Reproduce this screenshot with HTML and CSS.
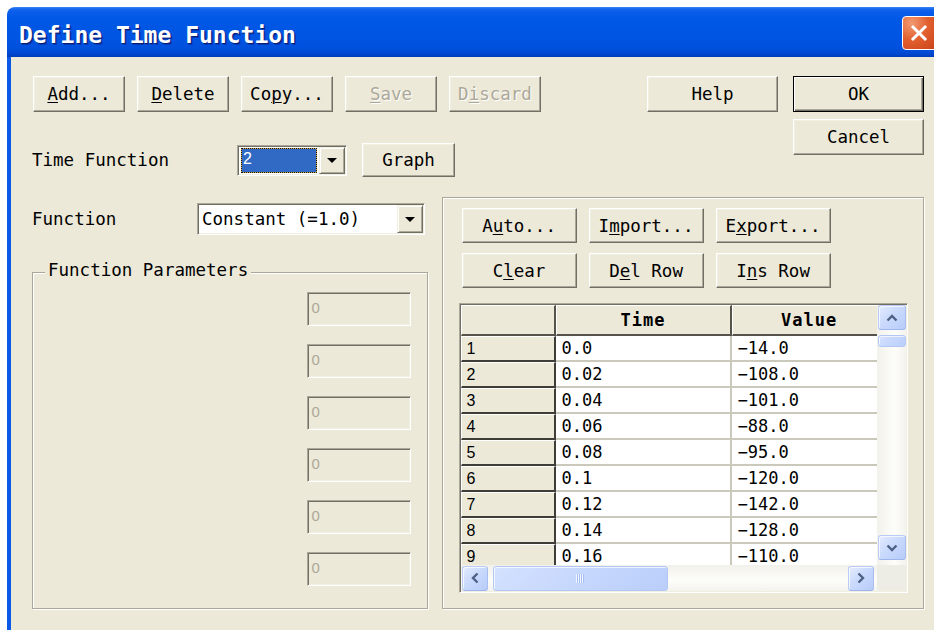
FILE: index.html
```html
<!DOCTYPE html>
<html lang="en">
<head>
<meta charset="utf-8">
<title>Define Time Function</title>
<link rel="stylesheet" href="styles.css">
</head>
<body>
<div class="window">
  <header class="titlebar">
    <span class="title">Define Time Function</span>
    <span class="close" aria-label="Close">
      <svg width="20" height="20" viewBox="0 0 20 20"><path d="M4 4 L16 16 M16 4 L4 16" stroke="#fff" stroke-width="3" stroke-linecap="square" fill="none"/></svg>
    </span>
  </header>
  <div class="frame">
    <div class="content">
      <div class="top">
        <div class="top-left">
          <div class="btn-row">
            <button class="btn"><u>A</u>dd...</button>
            <button class="btn"><u>D</u>elete</button>
            <button class="btn">Co<u>p</u>y...</button>
            <button class="btn" disabled><u>S</u>ave</button>
            <button class="btn" disabled>D<u>i</u>scard</button>
          </div>
          <div class="tf-row">
            <span class="label label-tf">Time Function</span>
            <div class="combo combo-tf">
              <div class="combo-field"><span class="combo-sel">2</span></div>
              <span class="combo-drop"><i class="tri"></i></span>
            </div>
            <button class="btn btn-graph">Graph</button>
          </div>
        </div>
        <div class="top-right">
          <button class="btn btn-wide">Help</button>
          <div class="ok-col">
            <button class="btn btn-wide btn-default">OK</button>
            <button class="btn btn-wide">Cancel</button>
          </div>
        </div>
      </div>

      <div class="lower">
        <div class="left-col">
          <div class="fn-row">
            <span class="label label-fn">Function</span>
            <div class="combo combo-fn">
              <div class="combo-field"><span class="combo-text">Constant (=1.0)</span></div>
              <span class="combo-drop"><i class="tri"></i></span>
            </div>
          </div>
          <div class="group">
            <span class="group-title">Function Parameters</span>
            <div class="params">
              <div class="field">0</div>
              <div class="field">0</div>
              <div class="field">0</div>
              <div class="field">0</div>
              <div class="field">0</div>
              <div class="field">0</div>
            </div>
          </div>
        </div>

        <div class="panel">
          <div class="panel-btns">
            <button class="btn">A<u>u</u>to...</button>
            <button class="btn">I<u>m</u>port...</button>
            <button class="btn">E<u>x</u>port...</button>
            <button class="btn">C<u>l</u>ear</button>
            <button class="btn">D<u>e</u>l Row</button>
            <button class="btn">I<u>n</u>s Row</button>
          </div>
          <div class="grid-box">
            <div class="sheet">
              <div class="cells">
                <div class="hd"></div><div class="hd">Time</div><div class="hd">Value</div>
                <div class="rh">1</div><div class="dc">0.0</div><div class="dc">&minus;14.0</div>
                <div class="rh">2</div><div class="dc">0.02</div><div class="dc">&minus;108.0</div>
                <div class="rh">3</div><div class="dc">0.04</div><div class="dc">&minus;101.0</div>
                <div class="rh">4</div><div class="dc">0.06</div><div class="dc">&minus;88.0</div>
                <div class="rh">5</div><div class="dc">0.08</div><div class="dc">&minus;95.0</div>
                <div class="rh">6</div><div class="dc">0.1</div><div class="dc">&minus;120.0</div>
                <div class="rh">7</div><div class="dc">0.12</div><div class="dc">&minus;142.0</div>
                <div class="rh">8</div><div class="dc">0.14</div><div class="dc">&minus;128.0</div>
                <div class="rh">9</div><div class="dc">0.16</div><div class="dc">&minus;110.0</div>
              </div>
            </div>
            <div class="vscroll">
              <span class="sb-btn"><svg width="12" height="8" viewBox="0 0 12 8"><path d="M1.5 6.5 L6 2 L10.5 6.5" fill="none" stroke="#4D6185" stroke-width="2.4"/></svg></span>
              <span class="thumb thumb-v"></span>
              <span class="sb-space"></span>
              <span class="sb-btn sb-last"><svg width="12" height="8" viewBox="0 0 12 8"><path d="M1.5 1.5 L6 6 L10.5 1.5" fill="none" stroke="#4D6185" stroke-width="2.4"/></svg></span>
            </div>
            <div class="hscroll">
              <span class="sb-btn"><svg width="8" height="12" viewBox="0 0 8 12"><path d="M6.5 1.5 L2 6 L6.5 10.5" fill="none" stroke="#4D6185" stroke-width="2.4"/></svg></span>
              <span class="thumb thumb-h"><i class="grip"></i></span>
              <span class="sb-space"></span>
              <span class="sb-btn"><svg width="8" height="12" viewBox="0 0 8 12"><path d="M1.5 1.5 L6 6 L1.5 10.5" fill="none" stroke="#4D6185" stroke-width="2.4"/></svg></span>
            </div>
            <div class="corner"></div>
          </div>
        </div>
      </div>
    </div>
  </div>
</div>
</body>
</html>
```

FILE: styles.css
```css
* { box-sizing: border-box; }

html, body { margin: 0; padding: 0; }

body {
  width: 934px;
  height: 630px;
  overflow: hidden;
  background: #fff;
  font-family: "DejaVu Sans Mono", "Liberation Mono", monospace;
  font-size: 17.5px;
  color: #000;
}

/* ---------- window chrome ---------- */
.window {
  margin: 7px 0 0 7px;
  width: 927px;
  height: 623px;
  overflow: hidden;
  border-top-left-radius: 8px;
  background: #ECE9D8;
  display: flex;
  flex-direction: column;
}

.titlebar {
  flex: none;
  height: 50px;
  display: flex;
  align-items: flex-start;
  padding-left: 12px;
  background: linear-gradient(to bottom,
    #3B86F6 0px, #1566EE 2px, #0A5DEA 5px, #0058E6 12px,
    #0055E2 30px, #0050DC 42px, #0047D0 47px, #003CB8 50px);
}

.title {
  margin-top: 15px;
  line-height: 27px;
  font-size: 23px;
  font-weight: bold;
  color: #fff;
  text-shadow: 1px 1px 0 #0A1E78, 2px 2px 0 rgba(10, 30, 120, .45);
  white-space: nowrap;
}

.close {
  margin: 9px -4px 0 auto;
  width: 36px;
  height: 34px;
  border: 1px solid #fff;
  border-radius: 4px;
  background: radial-gradient(circle at 25% 20%, #F29A74 0%, #E2602F 45%, #C9401A 100%);
  display: flex;
  align-items: center;
  justify-content: center;
  padding-right: 3px;
}

.frame {
  flex: 1;
  border-left: 4px solid #0A58E6;
}

.content {
  padding: 19px 10px 0 21px;
}

/* ---------- controls ---------- */
.btn {
  appearance: none;
  margin: 0;
  padding: 0;
  font: inherit;
  color: #000;
  background: #ECE9D8;
  border: 1px solid;
  border-color: #fff #716F64 #716F64 #fff;
  box-shadow: inset -1px -1px 0 #ACA899, inset 1px 1px 0 #F1EFE2;
  white-space: nowrap;
  text-align: center;
}

.btn u { text-underline-offset: 2px; text-decoration-thickness: 1px; }

.btn:disabled {
  color: #ACA899;
  text-shadow: 1px 1px 0 #fff;
}

.btn-default {
  border-color: #000;
  box-shadow: inset 1px 1px 0 #fff, inset -1px -1px 0 #716F64, inset -2px -2px 0 #ACA899;
}

.label { white-space: nowrap; }

.sunken {
  border: 1px solid;
  border-color: #ACA899 #fff #fff #ACA899;
  box-shadow: inset 1px 1px 0 #716F64, inset -1px -1px 0 #F1EFE2;
}

.combo {
  display: flex;
  padding: 1px;
  border: 1px solid;
  border-color: #ACA899 #fff #fff #ACA899;
  box-shadow: inset 1px 1px 0 #716F64, inset -1px -1px 0 #F1EFE2;
  background: #fff;
}

.combo-field {
  flex: 1;
  display: flex;
  align-items: center;
  background: #fff;
  min-width: 0;
}

.combo-drop {
  flex: none;
  width: 26px;
  display: flex;
  align-items: center;
  justify-content: center;
  background: #ECE9D8;
  border: 1px solid;
  border-color: #F1EFE2 #716F64 #716F64 #F1EFE2;
  box-shadow: inset 1px 1px 0 #fff, inset -1px -1px 0 #ACA899;
}

.tri {
  width: 0;
  height: 0;
  border-left: 5px solid transparent;
  border-right: 5px solid transparent;
  border-top: 5px solid #000;
  margin-top: 1px;
}

/* ---------- top area ---------- */
.top {
  display: flex;
  justify-content: space-between;
  height: 101px;
}

.btn-row {
  display: flex;
  gap: 12px;
  margin-left: 1px;
}

.btn-row .btn { width: 92px; height: 36px; }

.tf-row {
  display: flex;
  align-items: center;
  margin-top: 31px;
  height: 34px;
}

.label-tf { width: 205px; }

.combo-tf { width: 110px; height: 31px; }

.combo-tf .combo-field { padding: 1px 2px 1px 2px; align-items: stretch; }

.combo-sel {
  flex: 1;
  background: #316AC5;
  color: #fff;
  font-family: "Liberation Sans", Arial, sans-serif;
  font-size: 16px;
  line-height: 20px;
  padding-left: 1px;
  border: 1px solid #D8A848;
  outline: 1px dotted #111;
  outline-offset: -1px;
}

.btn-graph { width: 93px; height: 34px; margin-left: 15px; }

.top-right {
  display: flex;
  gap: 15px;
  align-items: flex-start;
}

.btn-wide { width: 131px; height: 36px; }

.ok-col {
  display: flex;
  flex-direction: column;
  gap: 7px;
}

/* ---------- lower area ---------- */
.lower {
  display: flex;
  gap: 14px;
  margin-top: 20px;
}

.left-col {
  width: 396px;
  display: flex;
  flex-direction: column;
}

.fn-row {
  display: flex;
  align-items: center;
  margin-top: 6px;
  height: 32px;
}

.label-fn { width: 165px; }

.combo-fn { width: 228px; height: 32px; }

.combo-text { padding-left: 3px; white-space: pre; }

.group {
  margin-top: 37px;
  height: 337px;
  border: 1px solid #ACA899;
  box-shadow: inset 1px 1px 0 #fff, 1px 1px 0 #fff;
  padding: 0 16px 0 12px;
}

.group-title {
  display: table;
  margin-top: -13px;
  padding: 0 3px;
  line-height: 20px;
  background: #ECE9D8;
  white-space: nowrap;
}

.params {
  display: flex;
  flex-direction: column;
  align-items: flex-end;
  gap: 18px;
  margin-top: 12px;
}

.field {
  width: 104px;
  height: 34px;
  padding: 7px 0 0 4px;
  border: 1px solid;
  border-color: #ACA899 #fff #fff #ACA899;
  box-shadow: inset 1px 1px 0 #716F64, inset -1px -1px 0 #F1EFE2;
  background: #ECE9D8;
  color: #ACA899;
  font-family: "Liberation Sans", Arial, sans-serif;
  font-size: 15px;
  line-height: 16px;
}

.panel {
  width: 483px;
  height: 412px;
  border: 1px solid #ACA899;
  box-shadow: inset 1px 1px 0 #fff, 1px 1px 0 #fff;
  padding: 10px 0 0 19px;
}

.panel-btns {
  display: grid;
  grid-template-columns: repeat(3, 115px);
  column-gap: 12px;
  row-gap: 10px;
}

.panel-btns .btn { height: 35px; }

/* ---------- spreadsheet ---------- */
.grid-box {
  margin: 15px 0 0 -3px;
  width: 449px;
  height: 290px;
  padding: 1px;
  border: 1px solid;
  border-color: #ACA899 #fff #fff #ACA899;
  box-shadow: inset 1px 1px 0 #716F64, inset -1px -1px 0 #F1EFE2;
  display: grid;
  grid-template-columns: 416px 29px;
  grid-template-rows: 260px 26px;
}

.sheet {
  overflow: hidden;
  background: #fff;
}

.cells {
  display: grid;
  grid-template-columns: 95px 176px 156px;
  grid-template-rows: 31px;
  grid-auto-rows: 26px;
  width: 427px;
}

.hd {
  background: #ECE9D8;
  border-top: 1px solid #fff;
  border-left: 1px solid #fff;
  border-right: 2px solid #55534C;
  border-bottom: 2px solid #55534C;
  text-align: center;
  font-weight: bold;
  font-size: 17px;
  letter-spacing: 1px;
  line-height: 28px;
}

.rh {
  background: #ECE9D8;
  border-top: 1px solid #fff;
  border-left: 1px solid #fff;
  border-right: 2px solid #3E3D38;
  border-bottom: 2px solid #3E3D38;
  padding-left: 5px;
  font-family: "Liberation Sans", Arial, sans-serif;
  font-size: 16px;
  line-height: 23px;
}

.dc {
  background: #fff;
  border-right: 2px solid #CBC8BC;
  border-bottom: 2px solid #CBC8BC;
  padding-left: 6px;
  font-size: 17px;
  line-height: 24px;
  white-space: nowrap;
}

/* ---------- scrollbars ---------- */
.vscroll {
  display: flex;
  flex-direction: column;
  padding: 0 0 0 1px;
  background: linear-gradient(to right, #F2F1EB, #FDFDFA 60%, #F4F3EE);
}

.vscroll .sb-btn { height: 25px; }

.vscroll .sb-last { margin-bottom: 5px; }

.hscroll {
  display: flex;
  align-items: center;
  padding: 0 3px 0 1px;
  background: linear-gradient(to bottom, #F2F1EB, #FDFDFA 60%, #F4F3EE);
}

.hscroll .sb-btn { width: 26px; height: 25px; }

.sb-space { flex: 1; }

.sb-btn {
  flex: none;
  display: flex;
  align-items: center;
  justify-content: center;
  border: 1px solid #BACCF6;
  border-bottom-color: #9DB4EC;
  border-right-color: #A8BDF0;
  border-radius: 3px;
  background: linear-gradient(135deg, #E4ECFE 0%, #CADAFD 45%, #B7CCF8 100%);
  box-shadow: inset 1px 1px 0 rgba(255, 255, 255, .7);
}

.thumb {
  flex: none;
  border: 1px solid #B3C7F5;
  border-radius: 3px;
  background: linear-gradient(135deg, #D4E1FE 0%, #C6D7FD 50%, #BACEFA 100%);
  box-shadow: inset 1px 1px 0 rgba(255, 255, 255, .7);
}

.thumb-v { height: 12px; margin-top: 5px; }

.thumb-h {
  width: 175px;
  height: 25px;
  margin-left: 5px;
  display: flex;
  align-items: center;
  justify-content: center;
}

.grip {
  width: 8px;
  height: 9px;
  background: repeating-linear-gradient(to right, #F2F6FF 0 1px, #A7BFF4 1px 2px);
}

.corner { background: #EEEDE5; }
```
